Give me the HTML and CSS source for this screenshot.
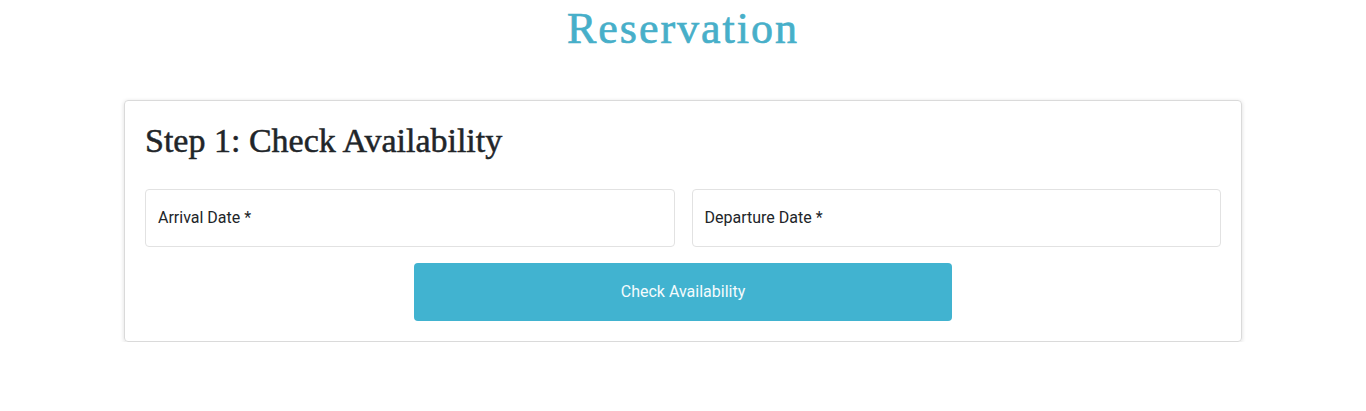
FILE: index.html
```html
<!DOCTYPE html>
<html lang="en">
<head>
<meta charset="utf-8">
<title>Reservation</title>
<link rel="stylesheet" href="styles.css">
</head>
<body>
<main class="page">
  <h1 class="page-title">Reservation</h1>
  <section class="card">
    <h2 class="card-title">Step 1: Check Availability</h2>
    <form class="form">
      <div class="row">
        <label class="field">
          <span class="field-label">Arrival Date *</span>
        </label>
        <label class="field">
          <span class="field-label">Departure Date *</span>
        </label>
      </div>
      <div class="actions">
        <button type="button" class="btn">Check Availability</button>
      </div>
    </form>
  </section>
</main>
</body>
</html>
```
FILE: styles.css
```css
* { box-sizing: border-box; }
html, body { margin: 0; padding: 0; background: #fff; }
body { font-family: Roboto, "Liberation Sans", sans-serif; color: #212529; }
.page { width: 1118px; margin: 0 auto; padding-top: 4px; }
.page-title {
  margin: 0;
  text-align: center;
  font-family: "Liberation Serif", "DejaVu Serif", serif;
  font-weight: 400;
  font-size: 44px;
  line-height: 50px;
  letter-spacing: 2px;
  color: #47afc9;
  -webkit-text-stroke: 0.7px #47afc9;
}
.card {
  margin-top: 46px;
  border: 1px solid #dadada;
  border-radius: 4px;
  box-shadow: 0 1px 4px rgba(0,0,0,0.14);
  padding: 20px 20px 20px 20px;
}
.card-title {
  margin: 0;
  font-family: "Liberation Serif", "DejaVu Serif", serif;
  font-weight: 400;
  font-size: 34px;
  line-height: 40px;
  color: #212529;
  -webkit-text-stroke: 0.5px #212529;
}
.form { margin-top: 28px; }
.row { display: flex; gap: 17px; }
.field {
  flex: 1;
  height: 58px;
  border: 1px solid #e2e2e2;
  border-radius: 4px;
  display: flex;
  align-items: center;
  padding: 0 12px 2px;
}
.field-label { font-size: 16px; color: #212529; }
.actions { display: flex; justify-content: center; margin-top: 16px; }
.btn {
  width: 538px;
  height: 58px;
  border: none;
  border-radius: 4px;
  background: #41b3d0;
  color: #f4fbfd;
  font-family: Roboto, "Liberation Sans", sans-serif;
  font-size: 16px;
  padding: 0 0 2px;
}
```
